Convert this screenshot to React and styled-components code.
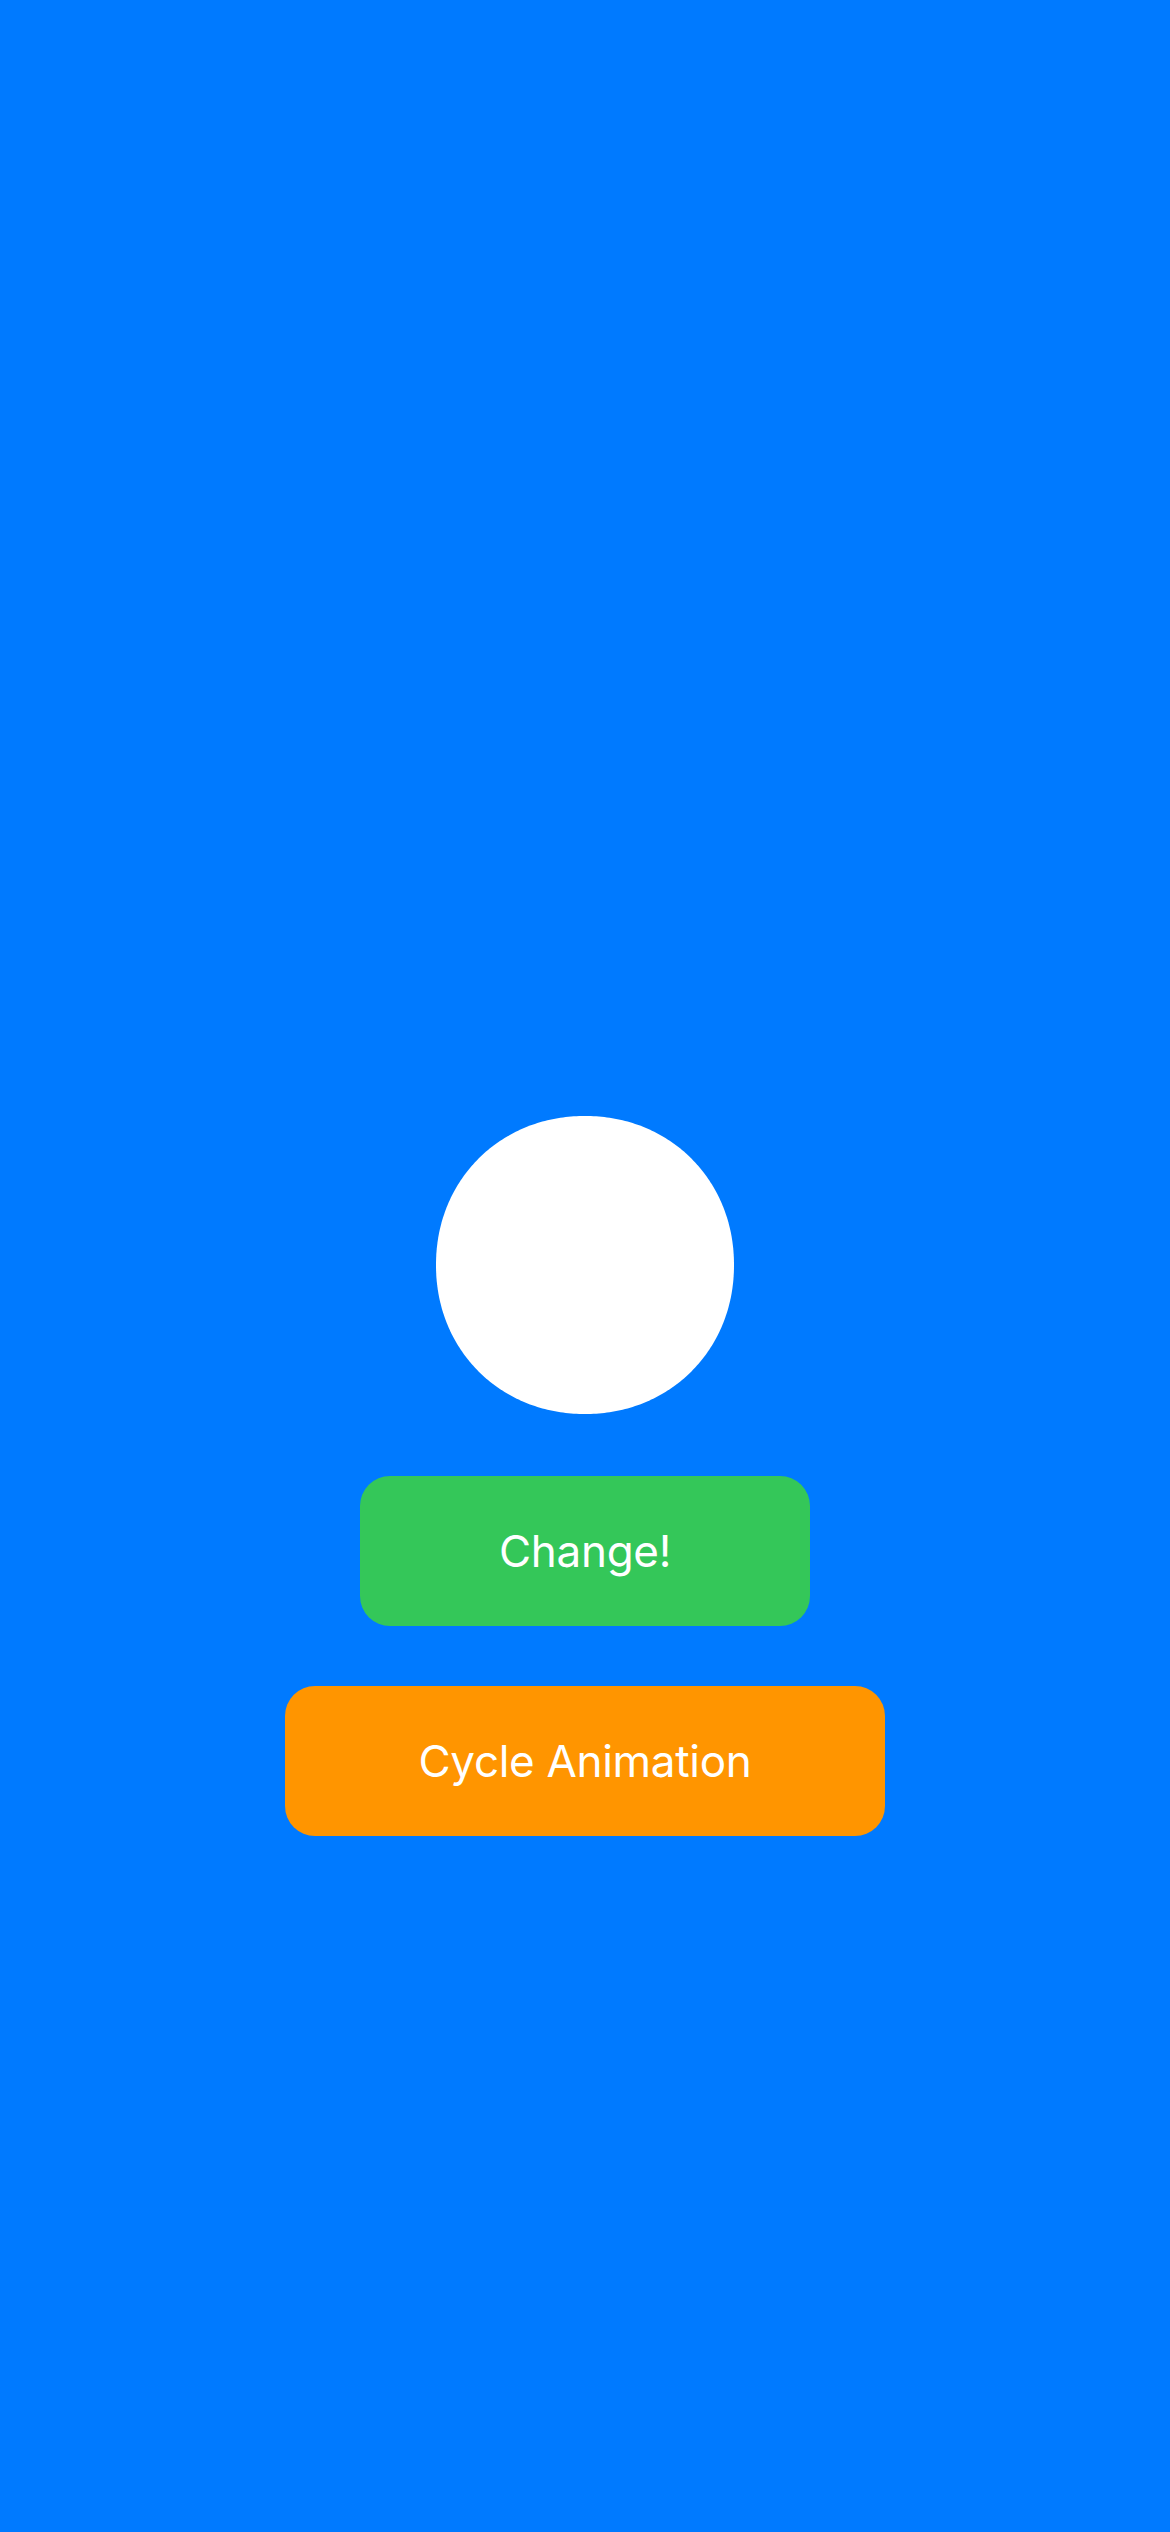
import React from 'react';
import styled, { createGlobalStyle } from 'styled-components';

const GlobalStyle = createGlobalStyle`
  html, body {
    margin: 0;
    padding: 0;
    background: #007aff;
  }
  body {
    font-family: Inter, "Noto Sans", "Liberation Sans", sans-serif;
  }
`;

const Screen = styled.div`
  width: 1170px;
  min-height: 2532px;
  background: #007aff;
  display: flex;
  flex-direction: column;
  align-items: center;
  padding-top: 1116px;
  box-sizing: border-box;
`;

const Blob = styled.svg`
  width: 298px;
  height: 298px;
  display: block;
`;

const Buttons = styled.div`
  display: flex;
  flex-direction: column;
  align-items: center;
  gap: 60px;
  margin-top: 62px;
`;

const Button = styled.button`
  width: ${p => p.$width}px;
  height: 150px;
  border: none;
  border-radius: 30px;
  background: ${p => p.$color};
  color: #fff;
  font-family: Inter, "Noto Sans", "Liberation Sans", sans-serif;
  font-size: 44px;
  font-weight: 400;
  letter-spacing: -0.3px;
  display: flex;
  align-items: center;
  justify-content: center;
  padding: 0;
  cursor: pointer;
`;

// superellipse outline, |x|^n + |y|^n = 1 (n just above 2 -> a slightly full circle)
function blobPath(r, n) {
  const pts = [];
  const steps = 360;
  for (let i = 0; i < steps; i++) {
    const t = (i / steps) * Math.PI * 2;
    const c = Math.cos(t);
    const s = Math.sin(t);
    const x = Math.sign(c) * Math.pow(Math.abs(c), 2 / n) * r + r;
    const y = Math.sign(s) * Math.pow(Math.abs(s), 2 / n) * r + r;
    pts.push(`${i === 0 ? 'M' : 'L'}${x.toFixed(2)} ${y.toFixed(2)}`);
  }
  return pts.join(' ') + ' Z';
}

export default function App() {
  const d = React.useMemo(() => blobPath(149, 2.06), []);

  return (
    <>
      <GlobalStyle />
      <Screen>
        <Blob viewBox="0 0 298 298">
          <path d={d} fill="#fff" />
        </Blob>
        <Buttons>
          <Button $width={450} $color="#34c759">Change!</Button>
          <Button $width={600} $color="#ff9500">Cycle Animation</Button>
        </Buttons>
      </Screen>
    </>
  );
}
